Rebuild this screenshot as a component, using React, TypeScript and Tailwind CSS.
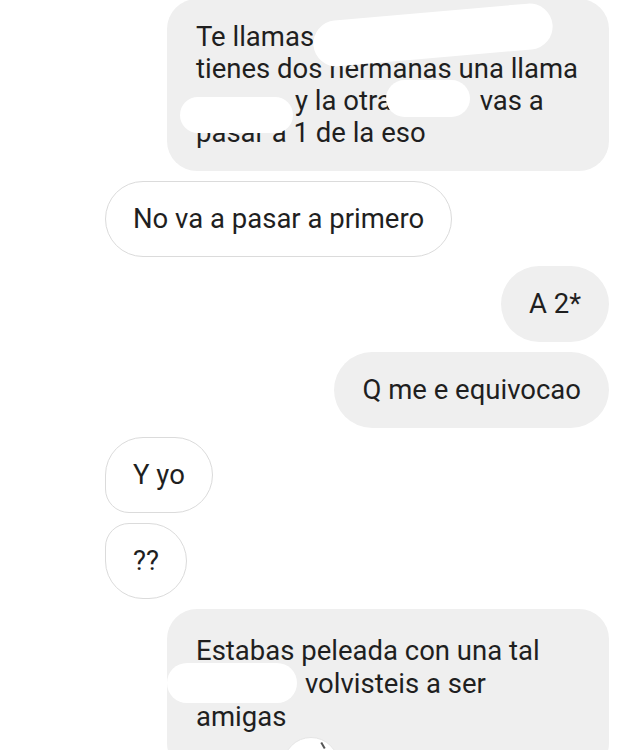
export default function App() {
  return (
    <div className="relative h-[750px] w-[624px] overflow-hidden bg-white font-['Roboto',sans-serif] text-[27.5px] leading-[32px] text-[#1f1f1f]">
      <div className="flex flex-col gap-[9.6px] pl-[105px] pr-[15px] -mt-[1px]">
        {/* Top message with redacted names */}
        <div className="relative self-end w-[442px] rounded-[30px] bg-[#efefef] px-[29px] py-[22px]">
          <div>Te llamas</div>
          <div>tienes dos hermanas una llama</div>
          <div className="flex">
            <span className="inline-block w-[99px]" />
            <span>y la otra</span>
            <span className="inline-block w-[88px]" />
            <span>vas a</span>
          </div>
          <div>pasar a 1 de la eso</div>
          <div className="absolute left-[146px] top-[13px] h-[46px] w-[240px] -rotate-[5deg] rounded-full bg-white" />
          <div className="absolute left-[13px] top-[98px] h-[36px] w-[113px] rounded-full bg-white" />
          <div className="absolute left-[219px] top-[81px] h-[37px] w-[84px] rounded-full bg-white" />
        </div>

        <div className="self-start rounded-full border-[1.5px] border-[#dbdbdb] bg-white px-[27px] py-[21px]">
          No va a pasar a primero
        </div>

        <div className="self-end rounded-full bg-[#efefef] px-[28px] py-[22px]">A 2*</div>

        <div className="self-end rounded-full bg-[#efefef] px-[28px] py-[22px]">Q me e equivocao</div>

        <div className="self-start rounded-[38px] rounded-bl-[24px] border-[1.5px] border-[#dbdbdb] bg-white px-[27px] py-[21px]">
          Y yo
        </div>

        <div className="self-start rounded-[38px] rounded-tl-[24px] border-[1.5px] border-[#dbdbdb] bg-white px-[27px] py-[21px]">
          ??
        </div>

        {/* Bottom message with redacted name */}
        <div className="relative self-end w-[442px] rounded-[30px] bg-[#efefef] px-[29px] pt-[25px] pb-[40px] leading-[33px]">
          <div>Estabas peleada con una tal</div>
          <div className="flex">
            <span className="inline-block w-[109px]" />
            <span>volvisteis a ser</span>
          </div>
          <div>amigas</div>
          <div className="absolute left-0 top-[54px] h-[40px] w-[130px] rounded-full bg-white" />
          <div className="absolute left-[116px] top-[128px] h-[56px] w-[56px] rounded-full border border-[#e5e5e5] bg-white">
            <span className="absolute left-[38px] top-[4px] h-[7px] w-[2px] -rotate-[30deg] bg-[#555]" />
          </div>
        </div>
      </div>
    </div>
  )
}
